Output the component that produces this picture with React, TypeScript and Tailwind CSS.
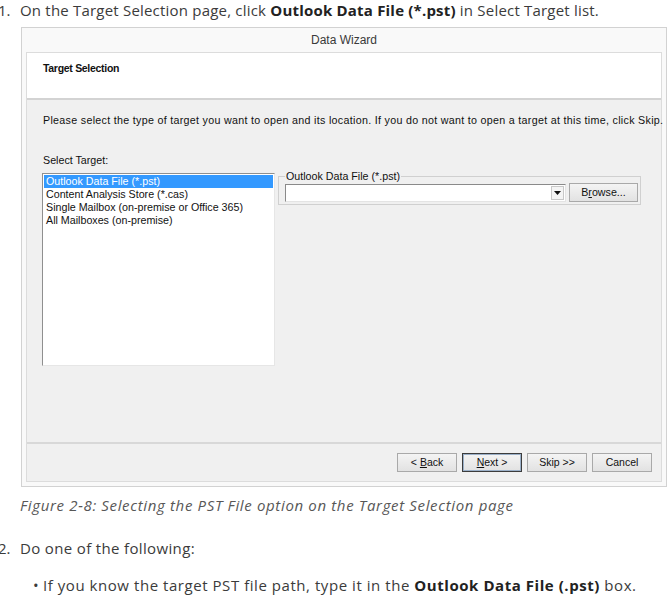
const doc = { fontFamily: '"Open Sans", Lato, sans-serif' }
const win = { fontFamily: '"Liberation Sans", Arial, sans-serif' }

function WinButton({ children, primary }: { children: React.ReactNode; primary?: boolean }) {
  return (
    <div
      className={
        'flex h-[19px] w-[60px] items-center justify-center bg-gradient-to-b from-[#f4f4f4] to-[#e2e2e2] text-[10.5px] text-[#111] ' +
        (primary ? 'border border-[#3c3c3c] shadow-[inset_0_0_0_1px_#9bb0c8]' : 'border border-[#a9a9a9]')
      }
    >
      {children}
    </div>
  )
}

export default function App() {
  return (
    <div className="h-[596px] w-[671px] overflow-hidden bg-white text-[#3b3b3b]" style={doc}>
      {/* step 1 */}
      <div className="flex h-[20px] items-center text-[15px] leading-[20px]">
        <span className="-ml-[2px] w-[22px]">1.</span>
        <span className="whitespace-nowrap tracking-[0.2px]">
          On the Target Selection page, click <b className="font-bold text-[#222]">Outlook Data File (*.pst)</b> in Select Target list.
        </span>
      </div>

      {/* wizard screenshot */}
      <div className="ml-[21px] mt-[7px] flex h-[460px] w-[646px] flex-col border border-[#d2d2d2] bg-[#f9f9f9] px-[4px] pb-[4px]" style={win}>
        <div className="flex h-[24px] items-center justify-center text-[12px] text-[#3a3a3a]">Data Wizard</div>
        <div className="flex flex-1 flex-col border border-[#dcdcdc]">
          <div className="h-[47px] border-b-2 border-[#d3d3d3] bg-white pl-[16px] pt-[8px] text-[10.5px] font-bold tracking-[-0.3px] text-[#111]">
            Target Selection
          </div>
          <div className="flex flex-1 flex-col bg-[#f0f0f0] px-[15px] pt-[14px] text-[10.7px] text-[#111]">
            <div className="whitespace-nowrap pl-[1px] leading-[13px] tracking-[0.3px]">
              Please select the type of target you want to open and its location. If you do not want to open a target at this time, click Skip.
            </div>
            <div className="mt-[27px] pl-[1px] leading-[13px]">Select Target:</div>
            <div className="mt-[6px] flex items-start gap-[3px]">
              <div className="h-[193px] w-[233px] border border-[#8f8f8f] border-r-[#e6e6e6] border-b-[#e6e6e6] bg-white p-[1px] leading-[13px]">
                <div className="bg-[#3399ff] pl-[2px] text-white">Outlook Data File (*.pst)</div>
                <div className="pl-[2px]">Content Analysis Store (*.cas)</div>
                <div className="pl-[2px]">Single Mailbox (on-premise or Office 365)</div>
                <div className="pl-[2px]">All Mailboxes (on-premise)</div>
              </div>
              <div className="relative mt-[3px] h-[29px] w-[363px] border border-[#d0d0d0]">
                <span className="absolute -top-[7px] left-[6px] bg-[#f0f0f0] px-[1px] leading-[13px]">Outlook Data File (*.pst)</span>
                <div className="mt-[6px] flex items-center gap-[3px] pl-[6px]">
                  <div className="flex h-[18px] w-[281px] justify-end border border-[#8a8a8a] border-r-[#e4e4e4] border-b-[#e4e4e4] bg-white">
                    <div className="m-[1px] flex w-[13px] items-center justify-center border border-[#c8c8c8] bg-[#f4f4f4]">
                      <svg width="7" height="4" viewBox="0 0 7 4">
                        <path d="M0 0h7L3.5 4z" fill="#111" />
                      </svg>
                    </div>
                  </div>
                  <div className="flex h-[19px] w-[69px] items-center justify-center border border-[#a9a9a9] bg-gradient-to-b from-[#f4f4f4] to-[#e2e2e2]">
                    B<u>r</u>owse...
                  </div>
                </div>
              </div>
            </div>
          </div>
          <div className="flex h-[39px] items-center justify-end gap-[5px] border-t-2 border-[#d8d8d8] bg-[#f0f0f0] pr-[9px]">
            <WinButton>
              <span className="mr-[3px]">&lt;</span>
              <u>B</u>ack
            </WinButton>
            <WinButton primary>
              <u>N</u>ext<span className="ml-[3px]">&gt;</span>
            </WinButton>
            <WinButton>Skip &gt;&gt;</WinButton>
            <WinButton>Cancel</WinButton>
          </div>
        </div>
      </div>

      {/* caption */}
      <div className="ml-[20px] mt-[8px] whitespace-nowrap text-[15px] italic leading-[20px] tracking-[0.65px] text-[#575757]">
        Figure 2-8: Selecting the PST File option on the Target Selection page
      </div>

      {/* step 2 */}
      <div className="mt-[23px] flex text-[15px] leading-[20px]">
        <span className="-ml-[2px] w-[22px]">2.</span>
        <span className="tracking-[0.35px]">Do one of the following:</span>
      </div>
      <div className="mt-[17px] flex text-[15px] leading-[20px]">
        <span className="w-[43px] pl-[33px]">•</span>
        <span className="whitespace-nowrap tracking-[0.55px]">
          If you know the target PST file path, type it in the <b className="font-bold text-[#222]">Outlook Data File (.pst)</b> box.
        </span>
      </div>
      <div className="mt-[3px] flex text-[15px] leading-[20px]">
        <span className="w-[43px]" />
        <span className="whitespace-nowrap tracking-[0.55px]">
          Click <b className="font-bold text-[#222]">Browse</b> to open the <b className="font-bold text-[#222]">Create PST File</b> window and navigate to the desired location
        </span>
      </div>
    </div>
  )
}
